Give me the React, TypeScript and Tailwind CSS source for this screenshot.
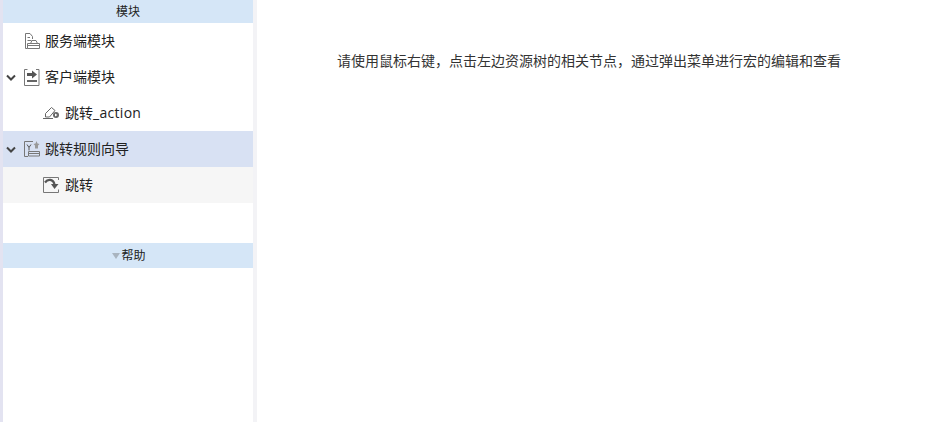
import React from "react";

const font = { fontFamily: '"Open Sans", "Noto Sans CJK SC", sans-serif' };

function Chevron() {
  return (
    <svg width="10" height="7" viewBox="0 0 10 7" fill="none" className="absolute left-[3px] top-[15px]">
      <path d="M1 1.500l4 4 4-4" stroke="#444" strokeWidth="2" />
    </svg>
  );
}

function ServerIcon() {
  return (
    <svg width="16" height="16" viewBox="0 0 16 16" fill="none" stroke="#777" strokeWidth="1">
      <path d="M1.500.500h4.500l2.500 3v2.500M1.500.500v15h2" />
      <path d="M3.500 4.500h2.500M3.500 7.500h4" />
      <path d="M3.500 10.500h12v5h-12zM3.500 12.500h12M6.500 10.500l1.500-3h4l1.500 3" />
    </svg>
  );
}

function ClientIcon() {
  return (
    <svg width="16" height="17" viewBox="0 0 16 17" fill="none">
      <path d="M3.500.500h-3v16h14.500V.500h-3" stroke="#777" />
      <path d="M3 4h5V1.500l5 4-5 4V7H3z" fill="#555" />
      <path d="M3 11h10v2H3z" fill="#666" />
    </svg>
  );
}

function ActionIcon() {
  return (
    <svg width="16" height="14" viewBox="0 0 16 14" fill="none">
      <path d="M2.500 11V7.500l6-6L12 4.500 6.500 11z" stroke="#666" />
      <path d="M0 12.500h10" stroke="#666" />
      <circle cx="13" cy="9" r="3" fill="#666" />
      <path d="M12 7.500l2.500 1.500-2.500 1.500z" fill="#fff" />
    </svg>
  );
}

function WizardIcon() {
  return (
    <svg width="16" height="16" viewBox="0 0 16 16" fill="none">
      <path d="M9 .500H.500v15H4" stroke="#777" />
      <path d="M3 3.500l2 3 2-3M5 6.500v3" stroke="#555" />
      <path d="M4.500 10.500h11v4.500h-11zM4.500 12.500h11" stroke="#777" />
      <path d="M12.500 0l1 2.500 2 .5-1.500 1.500v3h-3v-3L9.500 3l2-.5z" fill="#999" />
    </svg>
  );
}

function JumpIcon() {
  return (
    <svg width="16" height="16" viewBox="0 0 16 16" fill="none">
      <path d="M.500 15.500V.500h15v2.500M15.500 12.500v3H.500" stroke="#777" />
      <path d="M2 5.500C5 1.500 10 2 11.500 7" stroke="#555" strokeWidth="2.200" />
      <path d="M8 7h7.500L11.500 12z" fill="#555" />
    </svg>
  );
}

function Row({
  depth,
  icon,
  label,
  chevron,
  bg,
}: {
  depth: 0 | 1;
  icon: React.ReactNode;
  label: React.ReactNode;
  chevron?: boolean;
  bg?: string;
}) {
  return (
    <div className={`relative flex h-9 items-center ${depth === 0 ? "pl-[21px]" : "pl-[40px]"} ${bg ?? ""}`}>
      {chevron && <Chevron />}
      <span className={`flex shrink-0 items-center ${depth === 0 ? "w-[21px]" : "w-[22px]"}`}>{icon}</span>
      <span className="text-[14px] leading-none text-[#222]">{label}</span>
    </div>
  );
}

export default function App() {
  return (
    <div className="flex h-[422px] w-[952px] overflow-hidden bg-white" style={font}>
      <div className="w-[3px] shrink-0 bg-[#e3e3f1]" />
      <aside className="flex w-[250px] shrink-0 flex-col">
        <div className="flex h-[23px] items-center justify-center bg-[#d5e6f7] text-[12px] text-[#222]">模块</div>
        <Row depth={0} icon={<ServerIcon />} label="服务端模块" />
        <Row depth={0} chevron icon={<ClientIcon />} label="客户端模块" />
        <Row
          depth={1}
          icon={<ActionIcon />}
          label={
            <>
              跳转<span className="tracking-[0.3px]">_action</span>
            </>
          }
        />
        <Row depth={0} chevron icon={<WizardIcon />} label="跳转规则向导" bg="bg-[#d8e1f3]" />
        <Row depth={1} icon={<JumpIcon />} label="跳转" bg="bg-[#f6f6f6]" />
        <div className="h-10" />
        <div className="flex h-[25px] items-center justify-center gap-px bg-[#d5e6f7] pl-[2px] text-[12px] text-[#222]">
          <svg width="8" height="6" viewBox="0 0 8 6" className="mt-px">
            <path d="M0 0h8L4 6z" fill="#a9b4bf" />
          </svg>
          <span>帮助</span>
        </div>
      </aside>
      <div className="w-1 shrink-0 bg-[#f3f3f6]" />
      <main className="flex-1 pt-[51px]">
        <p className="pl-[80px] text-[14px] leading-[20px] text-[#333]">
          请使用鼠标右键，点击左边资源树的相关节点，通过弹出菜单进行宏的编辑和查看
        </p>
      </main>
    </div>
  );
}
